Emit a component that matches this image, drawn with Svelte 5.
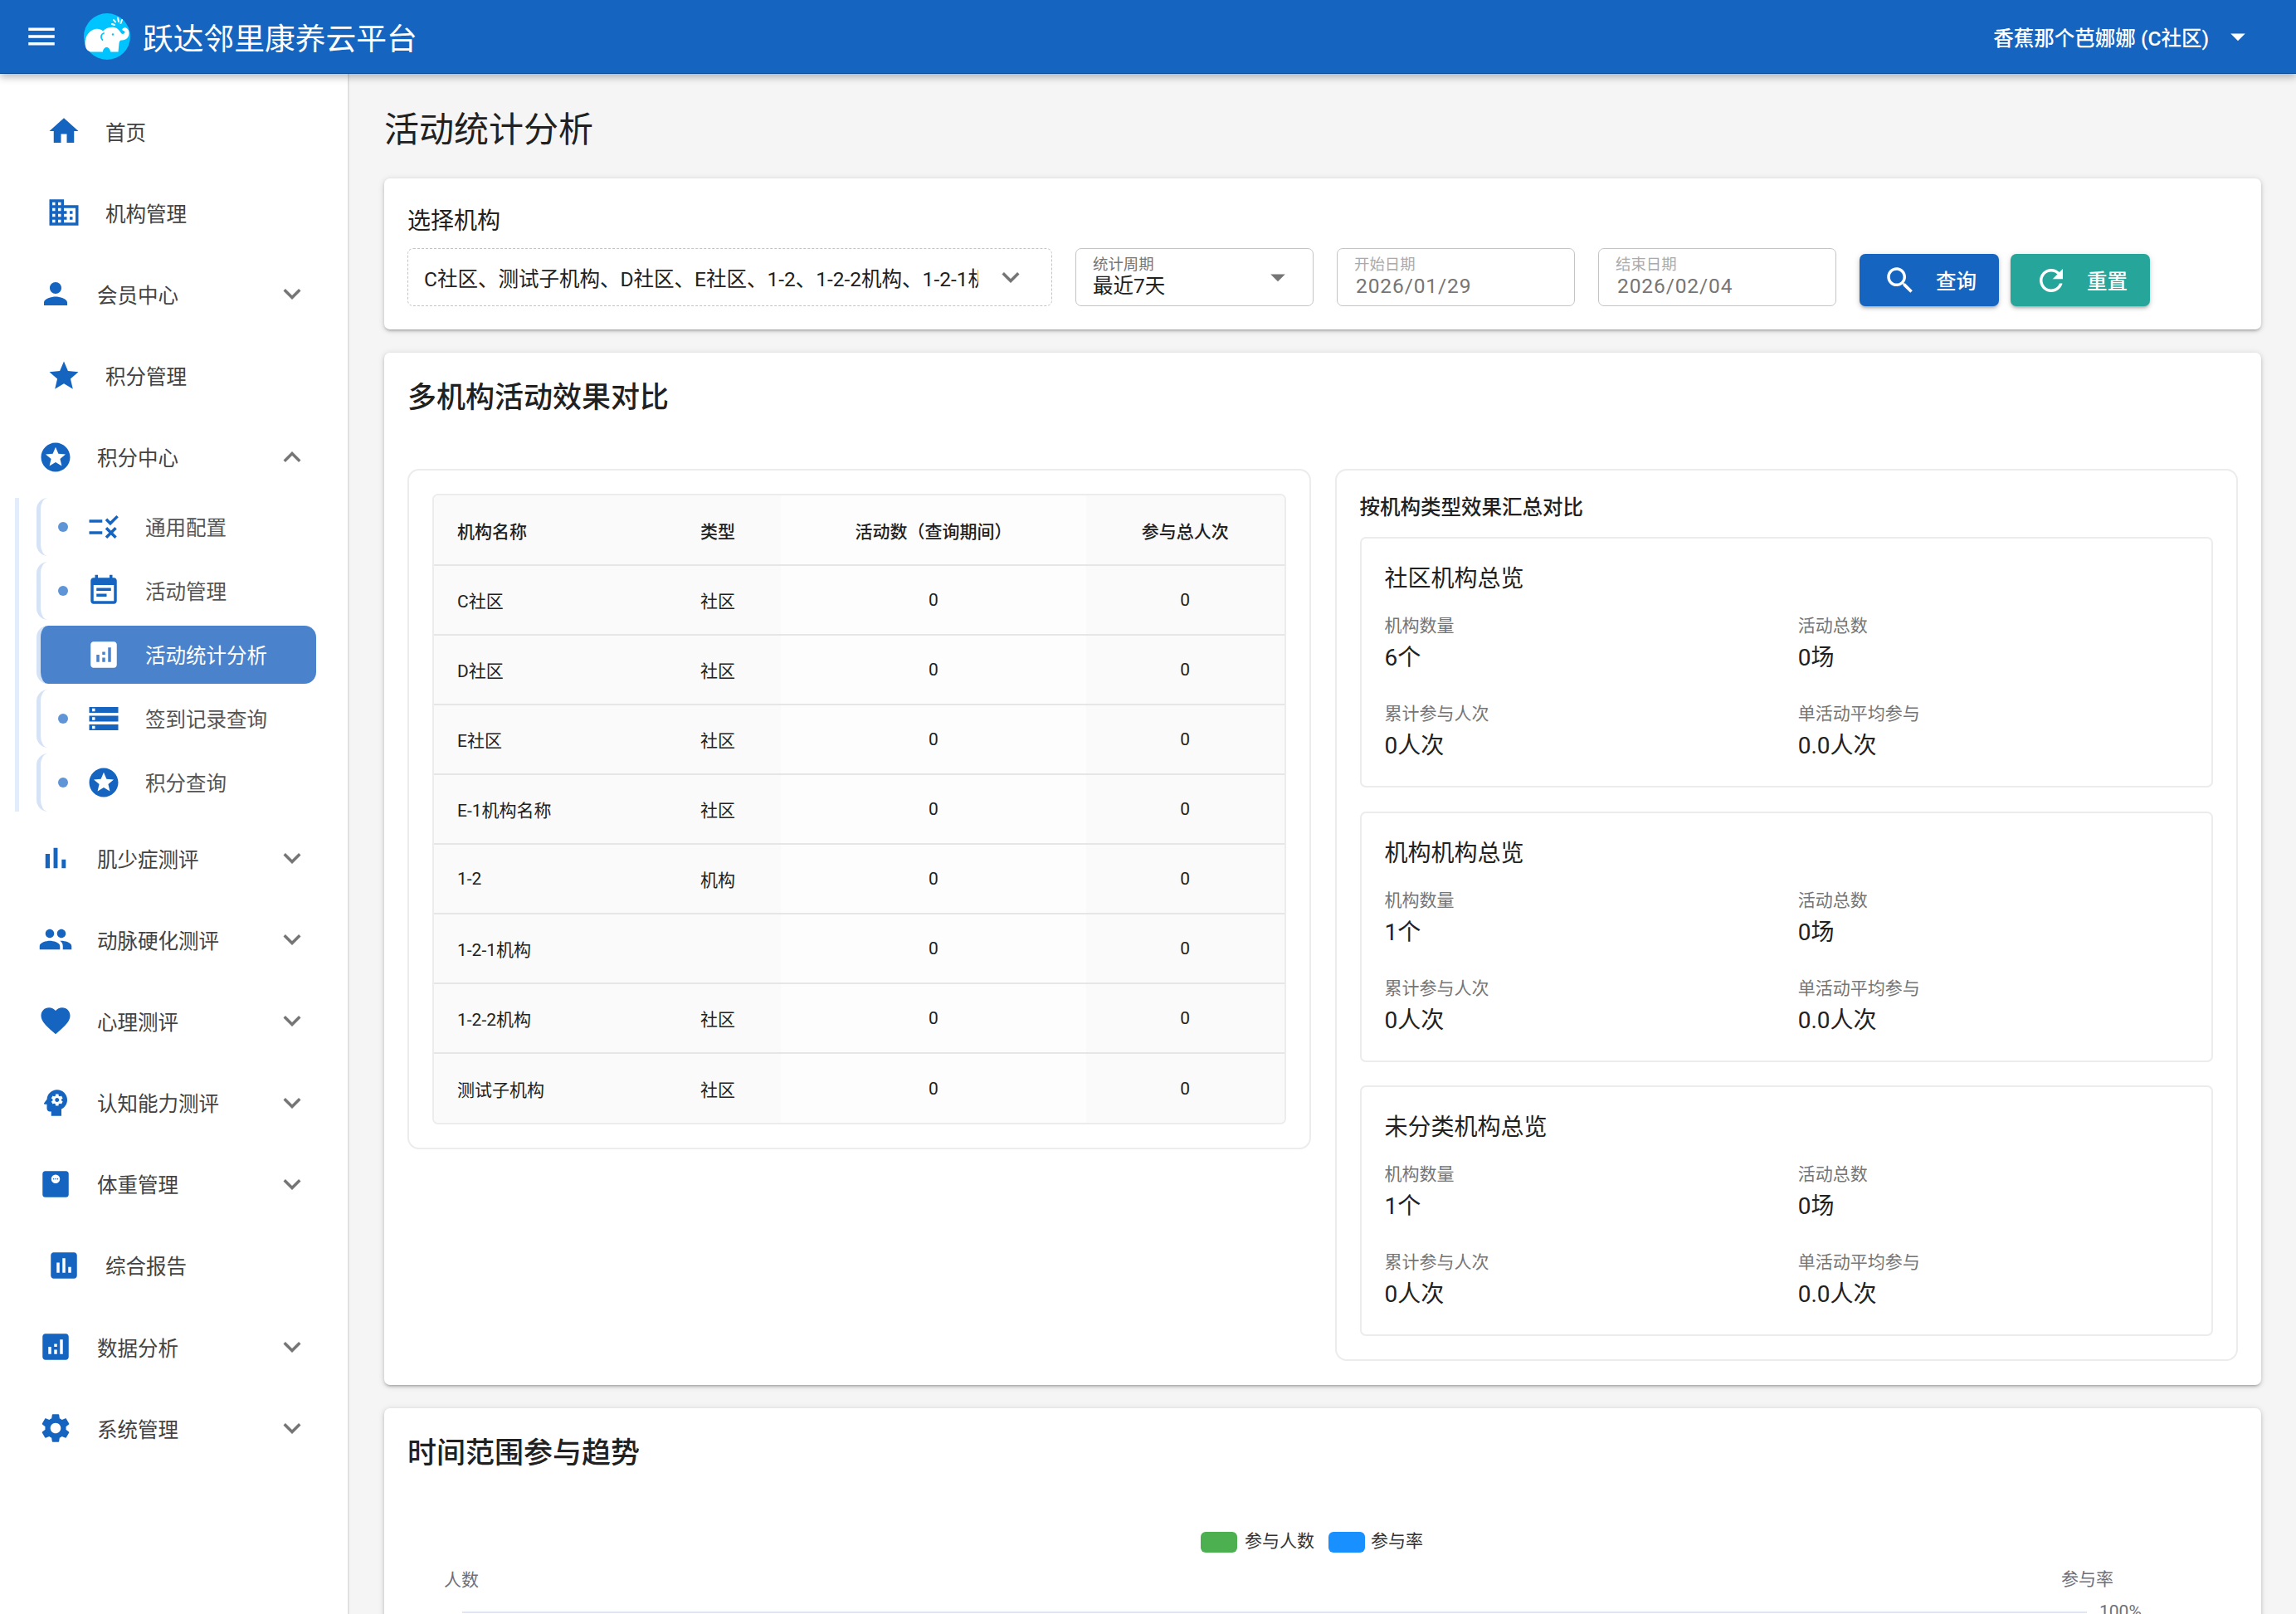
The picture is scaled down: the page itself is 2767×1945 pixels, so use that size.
<script>
  const blue = {
    home: 'M10 20v-6h4v6h5v-8h3L12 3 2 12h3v8z',
    domain: 'M12 7V3H2v18h20V7H12zM6 19H4v-2h2v2zm0-4H4v-2h2v2zm0-4H4V9h2v2zm0-4H4V5h2v2zm4 12H8v-2h2v2zm0-4H8v-2h2v2zm0-4H8V9h2v2zm0-4H8V5h2v2zm10 12h-8v-2h2v-2h-2v-2h2v-2h-2V9h8v10zm-2-8h-2v2h2v-2zm0 4h-2v2h2v-2z',
    person: 'M12 12c2.21 0 4-1.79 4-4s-1.79-4-4-4-4 1.79-4 4 1.79 4 4 4zm0 2c-2.67 0-8 1.34-8 4v2h16v-2c0-2.66-5.33-4-8-4z',
    star: 'M12 17.27L18.18 21l-1.64-7.03L22 9.24l-7.19-.61L12 2 9.19 8.63 2 9.24l5.46 4.73L5.82 21z',
    stars: 'M11.99 2C6.47 2 2 6.48 2 12s4.47 10 9.99 10C17.52 22 22 17.52 22 12S17.52 2 11.99 2zm4.24 16L12 15.45 7.77 18l1.12-4.81-3.73-3.23 4.92-.42L12 5l1.92 4.53 4.92.42-3.73 3.23L16.23 18z',
    rule: 'M16.54 11L13 7.46l1.41-1.41 2.12 2.12 4.24-4.24 1.41 1.41L16.54 11zM11 7H2v2h9V7zm10 6.41L19.59 12 17 14.59 14.41 12 13 13.41 15.59 16 13 18.59 14.41 20 17 17.41 19.59 20 21 18.59 18.41 16 21 13.41zM11 15H2v2h9v-2z',
    event: 'M17 10H7v2h10v-2zm2-7h-1V1h-2v2H8V1H6v2H5c-1.11 0-1.99.9-1.99 2L3 19c0 1.1.89 2 2 2h14c1.1 0 2-.9 2-2V5c0-1.1-.9-2-2-2zm0 16H5V8h14v11zm-5-5H7v2h7v-2z',
    analytics: 'M19 3H5c-1.1 0-2 .9-2 2v14c0 1.1.9 2 2 2h14c1.1 0 2-.9 2-2V5c0-1.1-.9-2-2-2zM9 17H7v-5h2v5zm4 0h-2v-3h2v3zm0-5h-2v-2h2v2zm4 5h-2V7h2v10z',
    storage: 'M2 20h20v-4H2v4zm2-3h2v2H4v-2zM2 4v4h20V4H2zm4 3H4V5h2v2zm-4 7h20v-4H2v4zm2-3h2v2H4v-2z',
    bars: 'M5 9.2h3V19H5V9.2zM10.6 5h2.8v14h-2.8V5zm5.6 8H19v6h-2.8v-6z',
    group: 'M16 11c1.66 0 2.99-1.34 2.99-3S17.66 5 16 5c-1.66 0-3 1.34-3 3s1.34 3 3 3zm-8 0c1.66 0 2.99-1.34 2.99-3S9.66 5 8 5C6.34 5 5 6.34 5 8s1.34 3 3 3zm0 2c-2.33 0-7 1.17-7 3.5V19h14v-2.5c0-2.33-4.67-3.5-7-3.5zm8 0c-.29 0-.62.02-.97.05 1.16.84 1.97 1.97 1.97 3.45V19h6v-2.5c0-2.33-4.67-3.5-7-3.5z',
    heart: 'M12 21.35l-1.45-1.32C5.4 15.36 2 12.28 2 8.5 2 5.42 4.42 3 7.5 3c1.74 0 3.41.81 4.5 2.09C13.09 3.81 14.76 3 16.5 3 19.58 3 22 5.42 22 8.5c0 3.78-3.4 6.86-8.55 11.54L12 21.35z',
    psychology: 'M13 8.57c-.79 0-1.43.64-1.43 1.43s.64 1.43 1.43 1.43 1.43-.64 1.43-1.43-.64-1.43-1.43-1.43zM13 3C9.25 3 6.2 5.94 6.02 9.64L4.1 12.2c-.25.33-.01.8.4.8H6v3c0 1.1.9 2 2 2h1v3h7v-4.68c2.36-1.12 4-3.53 4-6.32 0-3.87-3.13-7-7-7zm3 7c0 .13-.01.26-.02.39l.83.66c.08.06.1.16.05.25l-.8 1.39c-.05.09-.16.12-.24.09l-.99-.4c-.21.16-.43.29-.67.39L14 13.83c-.01.1-.1.17-.2.17h-1.6c-.1 0-.18-.07-.2-.17l-.15-1.06c-.25-.1-.47-.23-.68-.39l-.99.4c-.09.03-.2 0-.25-.09l-.8-1.39c-.05-.08-.03-.19.05-.25l.84-.66c-.01-.13-.02-.26-.02-.39s.02-.27.04-.39l-.85-.66c-.08-.06-.1-.16-.05-.26l.8-1.38c.05-.09.15-.12.24-.09l1 .4c.2-.15.43-.29.67-.39L12 6.17c.02-.1.1-.17.2-.17h1.6c.1 0 .18.07.2.17l.15 1.06c.24.1.46.23.67.39l1-.4c.09-.03.2 0 .24.09l.8 1.38c.05.09.03.2-.05.26l-.85.66c.03.12.04.25.04.39z',
    weight: 'M5 3h14a2 2 0 0 1 2 2v14a2 2 0 0 1-2 2H5a2 2 0 0 1-2-2V5a2 2 0 0 1 2-2zM12 5.4a3 3 0 1 0 0 6 3 3 0 1 0 0-6zM10.6 8a.45.45 0 1 0 0 .9.45.45 0 1 0 0-.9zM12 8a.45.45 0 1 0 0 .9.45.45 0 1 0 0-.9zM13.4 8a.45.45 0 1 0 0 .9.45.45 0 1 0 0-.9z',
    assessment: 'M19 3H5c-1.1 0-2 .9-2 2v14c0 1.1.9 2 2 2h14c1.1 0 2-.9 2-2V5c0-1.1-.9-2-2-2zM9 17H7v-7h2v7zm4 0h-2V7h2v10zm4 0h-2v-4h2v4z',
    settings: 'M19.14 12.94c.04-.3.06-.61.06-.94 0-.32-.02-.64-.07-.94l2.03-1.58c.18-.14.23-.41.12-.61l-1.92-3.32c-.12-.22-.37-.29-.59-.22l-2.39.96c-.5-.38-1.03-.7-1.62-.94l-.36-2.54c-.04-.24-.24-.41-.48-.41h-3.84c-.24 0-.43.17-.47.41l-.36 2.54c-.59.24-1.13.57-1.62.94l-2.39-.96c-.22-.08-.47 0-.59.22L2.74 8.87c-.12.21-.08.47.12.61l2.03 1.58c-.05.3-.09.63-.09.94s.02.64.07.94l-2.03 1.58c-.18.14-.23.41-.12.61l1.92 3.32c.12.22.37.29.59.22l2.39-.96c.5.38 1.03.7 1.62.94l.36 2.54c.05.24.24.41.48.41h3.84c.24 0 .44-.17.47-.41l.36-2.54c.59-.24 1.13-.56 1.62-.94l2.39.96c.22.08.47 0 .59-.22l1.92-3.32c.12-.22.07-.47-.12-.61l-2.01-1.58zM12 15.6c-1.98 0-3.6-1.62-3.6-3.6s1.62-3.6 3.6-3.6 3.6 1.62 3.6 3.6-1.62 3.6-3.6 3.6z'
  };

  const chevronDown = 'M16.59 8.59L12 13.17 7.41 8.59 6 10l6 6 6-6z';
  const chevronUp = 'M12 8l-6 6 1.41 1.41L12 10.83l4.59 4.58L18 14z';
  const caret = 'M7 10l5 5 5-5z';

  const nav = [
    { label: '首页', icon: blue.home },
    { label: '机构管理', icon: blue.domain },
    { label: '会员中心', icon: blue.person, group: true },
    { label: '积分管理', icon: blue.star },
    {
      label: '积分中心',
      icon: blue.stars,
      group: true,
      open: true,
      children: [
        { label: '通用配置', icon: blue.rule },
        { label: '活动管理', icon: blue.event },
        { label: '活动统计分析', icon: blue.analytics, active: true },
        { label: '签到记录查询', icon: blue.storage },
        { label: '积分查询', icon: blue.stars }
      ]
    },
    { label: '肌少症测评', icon: blue.bars, group: true },
    { label: '动脉硬化测评', icon: blue.group, group: true },
    { label: '心理测评', icon: blue.heart, group: true },
    { label: '认知能力测评', icon: blue.psychology, group: true },
    { label: '体重管理', icon: blue.weight, group: true },
    { label: '综合报告', icon: blue.assessment },
    { label: '数据分析', icon: blue.analytics, group: true },
    { label: '系统管理', icon: blue.settings, group: true }
  ];

  const rows = [
    ['C社区', '社区'],
    ['D社区', '社区'],
    ['E社区', '社区'],
    ['E-1机构名称', '社区'],
    ['1-2', '机构'],
    ['1-2-1机构', ''],
    ['1-2-2机构', '社区'],
    ['测试子机构', '社区']
  ];

  const summaries = [
    { title: '社区机构总览', orgs: '6个' },
    { title: '机构机构总览', orgs: '1个' },
    { title: '未分类机构总览', orgs: '1个' }
  ];
</script>

<div class="app">
  <header class="topbar">
    <svg class="icon menu" viewBox="0 0 24 24"><path d="M3 18h18v-2H3v2zm0-5h18v-2H3v2zm0-7v2h18V6H3z" /></svg>
    <svg class="logo" viewBox="0 0 56 56">
      <circle cx="28" cy="28" r="28" fill="#00c4ff" />
      <path
        fill="#fff"
        d="M1.5 37C1 28 7 20 14 19c4-.5 7 .5 9 2.500C26 18 32 16 37 17c4 1 6 4 8 7 1.500 2 4.500 1 4.500-2l-3.500-2c2-5 8-2.500 8.500 3 .5 6-4 10-9.500 9.500-1.500 0-2 1.500-2.500 3.500l-1 10.500H32c0-3-2-5.500-4.500-5.500S23 43.500 23 46.500H8C3.500 45 2 42 1.500 37z"
      />
      <path fill="none" stroke="#00c4ff" stroke-width="1.800" stroke-linecap="round" d="M24 24c-3 1-4.500 5-1.500 8" />
      <circle cx="35" cy="25.500" r="1.200" fill="#00c4ff" />
      <path fill="none" stroke="#fff" stroke-width="2" stroke-linecap="round" d="M36 8l2 2.500M41 5.500l1 4.500M46 8l-1.500 4M34 13l3 1" />
    </svg>
    <span class="brand">跃达邻里康养云平台</span>
    <span class="user">香蕉那个芭娜娜 (C社区)</span>
    <svg class="icon user-caret" viewBox="0 0 24 24"><path d={caret} /></svg>
  </header>

  <div class="body">
    <aside class="sidebar">
      {#each nav as item}
        <div class="nav-item" class:group={item.group}>
          <svg class="icon" viewBox="0 0 24 24"><path fill-rule="evenodd" d={item.icon} /></svg>
          <span>{item.label}</span>
          {#if item.group}
            <svg class="icon chevron" viewBox="0 0 24 24"><path d={item.open ? chevronUp : chevronDown} /></svg>
          {/if}
        </div>
        {#if item.children}
          <div class="sub-list">
            {#each item.children as child}
              <div class="sub-item" class:active={child.active}>
                <i class="dot"></i>
                <svg class="icon" viewBox="0 0 24 24"><path fill-rule="evenodd" d={child.icon} /></svg>
                <span>{child.label}</span>
              </div>
            {/each}
          </div>
        {/if}
      {/each}
    </aside>

    <main class="content">
      <h1>活动统计分析</h1>

      <section class="card filter-card">
        <div class="filter-label">选择机构</div>
        <div class="filters">
          <div class="org-select">
            <span class="org-text">C社区、测试子机构、D社区、E社区、1-2、1-2-2机构、1-2-1机构</span>
            <svg class="icon" viewBox="0 0 24 24"><path d={chevronDown} /></svg>
          </div>
          <div class="field period">
            <small>统计周期</small>
            <span>最近7天</span>
            <svg class="icon" viewBox="0 0 24 24"><path d={caret} /></svg>
          </div>
          <div class="field date">
            <small>开始日期</small>
            <span>2026/01/29</span>
          </div>
          <div class="field date">
            <small>结束日期</small>
            <span>2026/02/04</span>
          </div>
          <div class="buttons">
            <button class="btn primary">
              <svg class="icon" viewBox="0 0 24 24"><path d="M15.5 14h-.79l-.28-.27C15.41 12.59 16 11.11 16 9.500 16 5.910 13.090 3 9.500 3S3 5.910 3 9.500 5.910 16 9.500 16c1.610 0 3.090-.59 4.230-1.570l.27.28v.79l5 4.990L20.490 19l-4.990-5zm-6 0C7.010 14 5 11.990 5 9.500S7.010 5 9.500 5 14 7.010 14 9.500 11.990 14 9.500 14z" /></svg>
              查询
            </button>
            <button class="btn teal">
              <svg class="icon" viewBox="0 0 24 24"><path d="M17.65 6.350C16.200 4.900 14.210 4 12 4c-4.420 0-7.990 3.580-7.990 8s3.570 8 7.990 8c3.730 0 6.840-2.550 7.730-6h-2.080c-.82 2.330-3.040 4-5.650 4-3.310 0-6-2.690-6-6s2.690-6 6-6c1.660 0 3.140.69 4.220 1.780L13 11h7V4l-2.350 2.350z" /></svg>
              重置
            </button>
          </div>
        </div>
      </section>

      <section class="card compare-card">
        <h2>多机构活动效果对比</h2>
        <div class="compare">
          <div class="panel table-panel">
            <div class="table-wrap">
              <table>
                <thead>
                  <tr>
                    <th>机构名称</th>
                    <th>类型</th>
                    <th class="num">活动数（查询期间）</th>
                    <th class="num">参与总人次</th>
                  </tr>
                </thead>
                <tbody>
                  {#each rows as row}
                    <tr>
                      <td>{row[0]}</td>
                      <td>{row[1]}</td>
                      <td class="num">0</td>
                      <td class="num">0</td>
                    </tr>
                  {/each}
                </tbody>
              </table>
            </div>
          </div>

          <div class="panel summary-panel">
            <h3>按机构类型效果汇总对比</h3>
            {#each summaries as s}
              <div class="summary">
                <h4>{s.title}</h4>
                <div class="stats">
                  <div><label>机构数量</label><b>{s.orgs}</b></div>
                  <div><label>活动总数</label><b>0场</b></div>
                  <div><label>累计参与人次</label><b>0人次</b></div>
                  <div><label>单活动平均参与</label><b>0.0人次</b></div>
                </div>
              </div>
            {/each}
          </div>
        </div>
      </section>

      <section class="card trend-card">
        <h2>时间范围参与趋势</h2>
        <!-- y below is page y minus 1800 -->
        <svg class="chart" viewBox="0 0 2206 400">
          <rect x="956" y="46" width="44" height="25" rx="6" fill="#4caf50" />
          <text x="1009" y="57" class="legend">参与人数</text>
          <rect x="1110" y="46" width="44" height="25" rx="6" fill="#1890ff" />
          <text x="1161" y="57" class="legend">参与率</text>
          <text x="44" y="104" class="axis">人数</text>
          <text x="1993" y="103" class="axis">参与率</text>
          <line x1="66" x2="2024" y1="143" y2="143" stroke="#e0e6f1" stroke-width="2" />
          <text x="2039" y="142" class="axis">100%</text>
        </svg>
      </section>
    </main>
  </div>
</div>

<style>
  :global(body) {
    margin: 0;
    background: #f5f5f5;
    font-family: Roboto, "Noto Sans CJK SC", sans-serif;
  }

  .app {
    display: flex;
    flex-direction: column;
    height: 100vh;
    overflow: hidden;
  }

  .icon {
    width: 42px;
    height: 42px;
    flex: none;
    fill: #1565c0;
  }

  .topbar {
    position: relative;
    z-index: 2;
    display: flex;
    align-items: center;
    flex: none;
    box-sizing: border-box;
    height: 89px;
    padding-left: 29px;
    background: #1565c0;
    border-bottom: 1px solid #0d4a94;
    box-shadow: 0 4px 9px rgba(0, 0, 0, 0.28);
    color: #fff;
  }

  .menu {
    fill: #fff;
  }

  .logo {
    width: 56px;
    height: 56px;
    margin-left: 30px;
    flex: none;
  }

  .brand {
    margin-left: 15px;
    font-size: 36.75px;
  }

  .user {
    margin-left: auto;
    font-size: 24.5px;
    font-weight: 500;
  }

  .user-caret {
    fill: #fff;
    margin: 0 49px 0 14px;
  }

  .body {
    display: flex;
    flex: 1;
    min-height: 0;
  }

  .sidebar {
    flex: none;
    width: 419px;
    padding-top: 20px;
    background: #fff;
    border-right: 2px solid #e0e0e0;
    color: #424242;
    font-size: 24.5px;
  }

  .nav-item {
    display: flex;
    align-items: center;
    gap: 29px;
    height: 98.2px;
    padding: 0 46px 0 56px;
    box-sizing: border-box;
  }

  .nav-item.group {
    padding-left: 46px;
  }

  .chevron {
    margin-left: auto;
    fill: #757575;
  }

  .sub-list {
    display: flex;
    flex-direction: column;
    gap: 7px;
    margin: 0 0 7px 18px;
    padding-left: 21px;
    border-left: 5px solid #e3ecfb;
  }

  .sub-item {
    display: flex;
    align-items: center;
    width: 337px;
    height: 70px;
    box-sizing: border-box;
    padding-left: 21px;
    border-left: 5px solid #d6e3f7;
    border-radius: 14px;
    color: #555;
  }

  .sub-item span {
    margin-left: 29px;
  }

  .dot {
    width: 12px;
    height: 12px;
    margin-right: 22px;
    border-radius: 50%;
    background: #5f95d6;
  }

  .sub-item.active {
    background: #4a83cc;
    color: #fff;
  }

  .sub-item.active .icon {
    fill: #fff;
  }

  .sub-item.active .dot {
    visibility: hidden;
  }

  .content {
    flex: 1;
    min-width: 0;
    padding: 39px 42px 0;
  }

  h1 {
    margin: 0 0 29px;
    font-size: 42px;
    font-weight: 400;
    line-height: 58px;
    color: #212121;
  }

  .card {
    margin-bottom: 28px;
    padding: 28px;
    background: #fff;
    border-radius: 7px;
    box-shadow: 0 3px 3px -2px rgba(0, 0, 0, 0.2), 0 2px 4px 0 rgba(0, 0, 0, 0.14), 0 1px 8px 0 rgba(0, 0, 0, 0.12);
  }

  h2 {
    margin: 0;
    font-size: 35px;
    font-weight: 500;
    line-height: 54px;
    color: #212121;
  }

  .filter-label {
    margin-bottom: 8px;
    font-size: 28px;
    line-height: 48px;
    color: #212121;
  }

  .filters {
    display: flex;
    align-items: flex-end;
    gap: 28px;
    height: 70px;
  }

  .org-select {
    display: flex;
    align-items: center;
    box-sizing: border-box;
    width: 777px;
    height: 70px;
    padding: 0 28px 0 19px;
    border: 1.500px dashed #c4c4c4;
    border-radius: 7px;
    font-size: 24.5px;
    color: #212121;
  }

  .org-text {
    width: 668px;
    overflow: hidden;
    white-space: nowrap;
  }

  .org-select .icon {
    margin-left: auto;
    fill: #757575;
  }

  .field {
    position: relative;
    display: flex;
    flex-direction: column;
    justify-content: center;
    box-sizing: border-box;
    width: 287px;
    height: 70px;
    padding: 0 20px;
    border: 1.500px solid #c4c4c4;
    border-radius: 7px;
    font-size: 24.5px;
    line-height: 30px;
    color: #212121;
  }

  .field small {
    font-size: 18.4px;
    line-height: 22px;
    color: #757575;
  }

  .period .icon {
    position: absolute;
    top: 13px;
    right: 21px;
    fill: #757575;
  }

  .date small {
    color: #aaa;
  }

  .date span {
    padding-left: 2px;
    letter-spacing: 0.9px;
    color: #757575;
  }

  .buttons {
    display: flex;
    gap: 14px;
  }

  .btn {
    display: flex;
    align-items: center;
    gap: 22px;
    width: 168px;
    height: 63px;
    padding: 0 0 0 28px;
    border: 0;
    border-radius: 7px;
    font: 500 24.5px Roboto, "Noto Sans CJK SC", sans-serif;
    color: #fff;
    box-shadow: 0 3px 3px -2px rgba(0, 0, 0, 0.2), 0 3px 4px 0 rgba(0, 0, 0, 0.14), 0 1px 8px 0 rgba(0, 0, 0, 0.12);
  }

  .btn .icon {
    fill: #fff;
  }

  .primary {
    background: #1565c0;
  }

  .teal {
    background: #26a69a;
  }

  .compare-card {
    padding-bottom: 29px;
  }

  .compare {
    display: grid;
    grid-template-columns: 1fr 1fr;
    gap: 29px;
    align-items: start;
    margin-top: 58px;
  }

  .panel {
    padding: 28px;
    border: 2px solid #ececec;
    border-radius: 14px;
  }

  .table-wrap {
    border: 2px solid #ececec;
    border-radius: 7px;
    overflow: hidden;
  }

  table {
    width: 100%;
    table-layout: fixed;
    border-collapse: collapse;
    font-size: 21px;
    color: #212121;
  }

  th,
  td {
    box-sizing: border-box;
    height: 84px;
    padding: 0 0 0 28px;
    text-align: left;
    border-bottom: 2px solid #e6e6e6;
    background: #fafafa;
  }

  th {
    font-weight: 500;
  }

  th:nth-child(1) {
    width: 293px;
  }

  th:nth-child(2) {
    width: 125px;
  }

  th:nth-child(3) {
    width: 368px;
  }

  th:nth-child(3),
  td:nth-child(3) {
    background: #fdfdfd;
  }

  .num {
    padding: 0;
    text-align: center;
  }

  tbody tr:last-child td {
    border-bottom: 0;
  }

  h3 {
    margin: 0 0 18px;
    font-size: 24.5px;
    font-weight: 500;
    line-height: 34px;
    color: #212121;
  }

  .summary {
    padding: 26px 28px;
    border: 2px solid #ececec;
    border-radius: 7px;
    box-sizing: border-box;
    height: 302px;
    margin-bottom: 28.5px;
  }

  .summary:last-child {
    margin-bottom: 0;
  }

  h4 {
    margin: 0 0 18px;
    font-size: 28px;
    font-weight: 400;
    line-height: 46px;
    color: #212121;
  }

  .stats {
    display: grid;
    grid-template-columns: 1fr 1fr;
    gap: 32px 28px;
  }

  label {
    display: block;
    margin-bottom: 4px;
    font-size: 21px;
    line-height: 30px;
    color: #757575;
  }

  b {
    display: block;
    font-size: 28px;
    font-weight: 400;
    line-height: 40px;
    color: #212121;
  }

  .chart {
    display: block;
    width: 2206px;
    height: 400px;
    margin-top: 21px;
  }

  .chart text {
    font-family: Roboto, "Noto Sans CJK SC", sans-serif;
    font-size: 21px;
    dominant-baseline: central;
  }

  .chart .legend {
    fill: #333;
  }

  .chart .axis {
    fill: #6e7079;
  }
</style>
